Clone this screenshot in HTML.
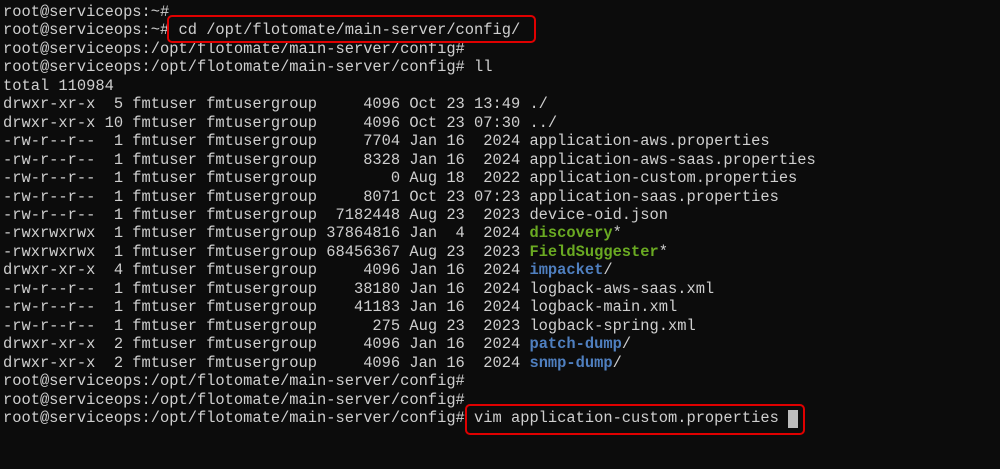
<!DOCTYPE html>
<html><head><meta charset="utf-8"><style>
html,body{margin:0;padding:0;background:#0c0c0c;width:1000px;height:469px;overflow:hidden}
pre{margin:0;position:absolute;left:3px;top:3px;font-family:"Liberation Mono",monospace;font-size:15.4px;line-height:18.45px;color:#cfcfcf;letter-spacing:0}
.g{color:#6aaa22;font-weight:bold}
.b{color:#4f7fbf;font-weight:bold}
.box{position:absolute;border:2.5px solid #e00000;border-radius:5px}
.cur{position:absolute;left:788px;top:410px;width:10px;height:18px;background:#bdbdbd}
</style></head><body>
<pre>root@serviceops:~#
root@serviceops:~# cd /opt/flotomate/main-server/config/
root@serviceops:/opt/flotomate/main-server/config#
root@serviceops:/opt/flotomate/main-server/config# ll
total 110984
drwxr-xr-x  5 fmtuser fmtusergroup     4096 Oct 23 13:49 ./
drwxr-xr-x 10 fmtuser fmtusergroup     4096 Oct 23 07:30 ../
-rw-r--r--  1 fmtuser fmtusergroup     7704 Jan 16  2024 application-aws.properties
-rw-r--r--  1 fmtuser fmtusergroup     8328 Jan 16  2024 application-aws-saas.properties
-rw-r--r--  1 fmtuser fmtusergroup        0 Aug 18  2022 application-custom.properties
-rw-r--r--  1 fmtuser fmtusergroup     8071 Oct 23 07:23 application-saas.properties
-rw-r--r--  1 fmtuser fmtusergroup  7182448 Aug 23  2023 device-oid.json
-rwxrwxrwx  1 fmtuser fmtusergroup 37864816 Jan  4  2024 <span class="g">discovery</span>*
-rwxrwxrwx  1 fmtuser fmtusergroup 68456367 Aug 23  2023 <span class="g">FieldSuggester</span>*
drwxr-xr-x  4 fmtuser fmtusergroup     4096 Jan 16  2024 <span class="b">impacket</span>/
-rw-r--r--  1 fmtuser fmtusergroup    38180 Jan 16  2024 logback-aws-saas.xml
-rw-r--r--  1 fmtuser fmtusergroup    41183 Jan 16  2024 logback-main.xml
-rw-r--r--  1 fmtuser fmtusergroup      275 Aug 23  2023 logback-spring.xml
drwxr-xr-x  2 fmtuser fmtusergroup     4096 Jan 16  2024 <span class="b">patch-dump</span>/
drwxr-xr-x  2 fmtuser fmtusergroup     4096 Jan 16  2024 <span class="b">snmp-dump</span>/
root@serviceops:/opt/flotomate/main-server/config#
root@serviceops:/opt/flotomate/main-server/config#
root@serviceops:/opt/flotomate/main-server/config# vim application-custom.properties </pre>
<div class="cur"></div>
<div class="box" style="left:167px;top:15px;width:365px;height:24px"></div>
<div class="box" style="left:465px;top:404px;width:336px;height:27px"></div>
</body></html>
